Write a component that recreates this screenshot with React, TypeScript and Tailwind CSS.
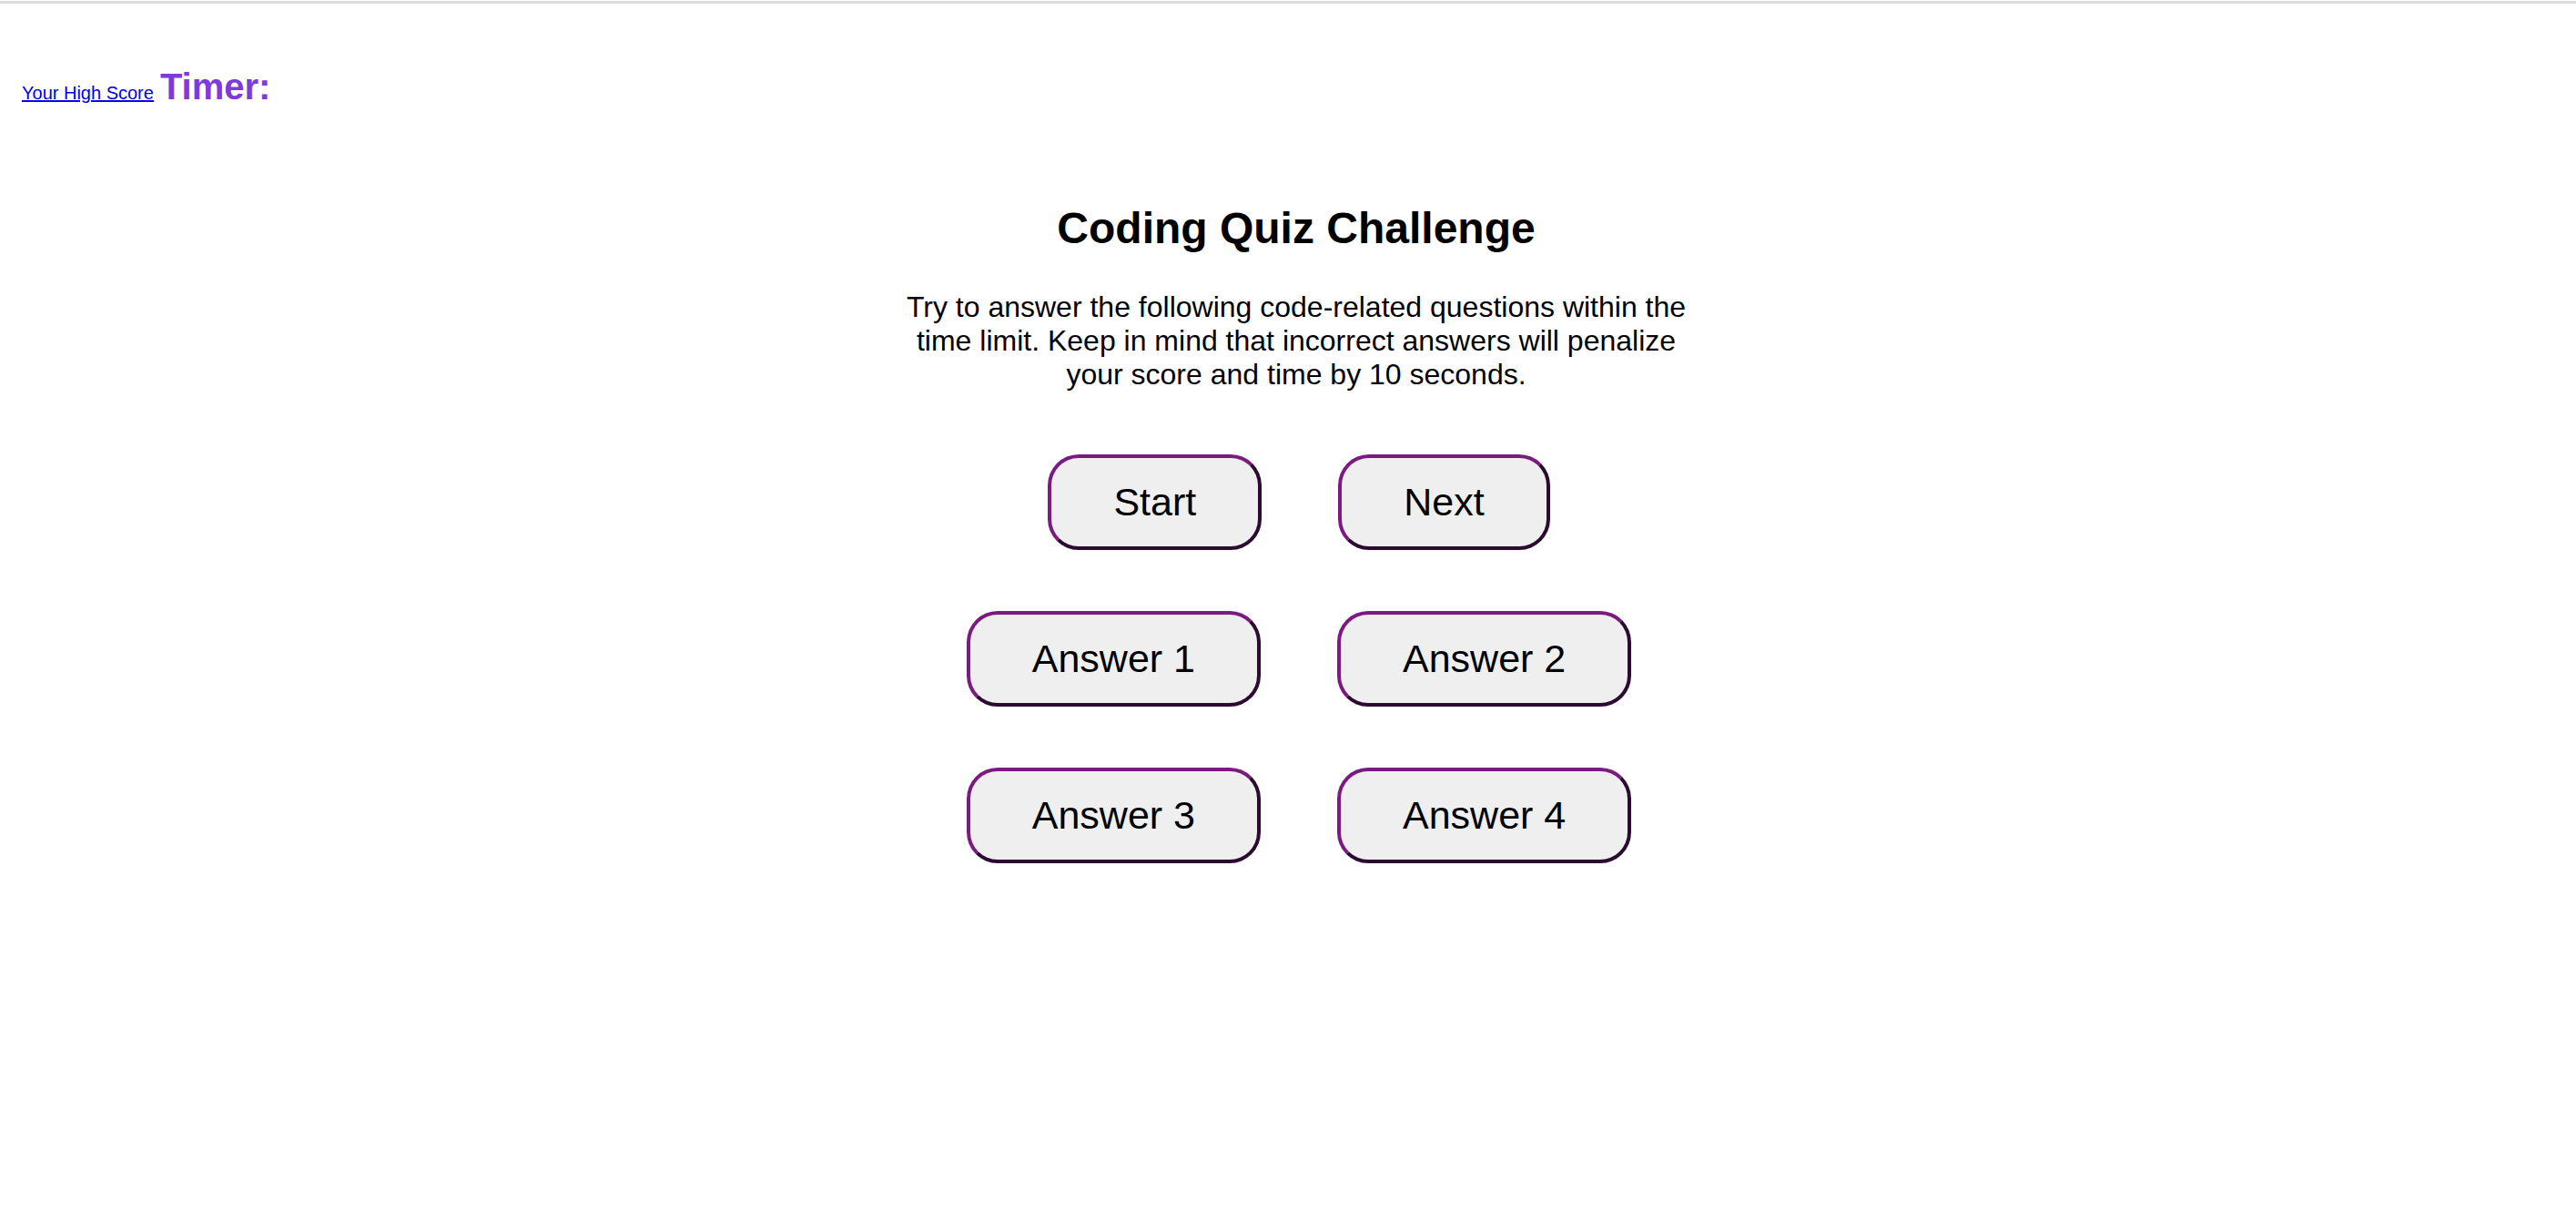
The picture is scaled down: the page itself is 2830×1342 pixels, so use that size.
import React from 'react';

const btn =
  'bg-[#efefef] text-black text-[43px] leading-[49px] px-[68px] py-[24px] rounded-[34px] border-4 border-solid border-t-[#7b1b7f] border-l-[#7b1b7f] border-r-[#2b0b2f] border-b-[#2b0b2f]';

export default function App() {
  return (
    <div className="min-h-screen bg-white text-black" style={{ fontFamily: '"Liberation Sans", Arial, sans-serif' }}>
      {/* top rule */}
      <div className="mt-[1px] h-[3px] bg-[#dcdcdc]" />

      {/* header */}
      <header className="mt-[68px] flex items-baseline gap-[7px] px-[24px]">
        <a href="#" className="text-[20px] leading-[23px] text-[#0000ee] underline">
          Your High Score
        </a>
        <span className="text-[40px] leading-[46px] font-bold text-[#7e3bd9]">Timer:</span>
      </header>

      {/* main */}
      <main className="mt-[105px] flex flex-col items-center pl-[18px]">
        <h1 className="text-[48px] leading-[55px] font-bold">Coding Quiz Challenge</h1>
        <p className="mt-[41px] w-[880px] text-center text-[32px] leading-[37px]">
          Try to answer the following code-related questions within the time limit. Keep in mind that incorrect
          answers will penalize your score and time by 10 seconds.
        </p>

        <div className="mt-[69px] flex flex-col items-center gap-[67px] pl-[6px]">
          <div className="flex gap-[84px]">
            <button className={btn}>Start</button>
            <button className={btn}>Next</button>
          </div>
          <div className="flex gap-[84px]">
            <button className={btn}>Answer 1</button>
            <button className={btn}>Answer 2</button>
          </div>
          <div className="flex gap-[84px]">
            <button className={btn}>Answer 3</button>
            <button className={btn}>Answer 4</button>
          </div>
        </div>
      </main>
    </div>
  );
}
